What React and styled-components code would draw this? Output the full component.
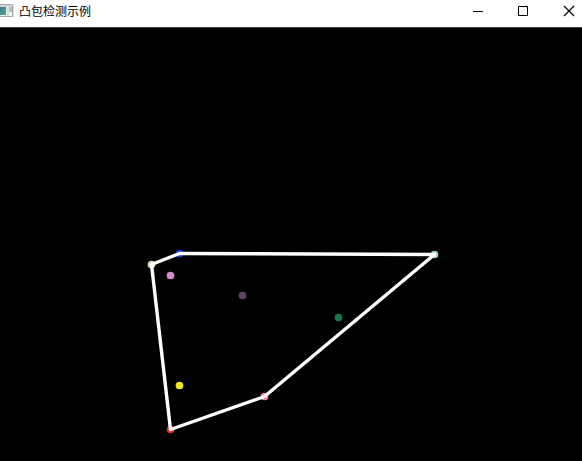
import React from "react";
import styled, { createGlobalStyle } from "styled-components";

const GlobalStyle = createGlobalStyle`
  body { margin: 0; background: #000; overflow: hidden; }
`;

const Window = styled.main`
  width: 582px;
  height: 461px;
  display: flex;
  flex-direction: column;
  overflow: hidden;
  background: #000;
`;

const TitleBar = styled.header`
  box-sizing: border-box;
  height: 28px;
  flex: none;
  display: flex;
  align-items: flex-start;
  background: #fff;
  border-bottom: 1px solid #3c3c3c;
`;

const AppIcon = styled.svg`
  display: block;
  flex: none;
  width: 14px;
  height: 24px;
`;

const Title = styled.h1`
  margin: 0 auto 0 5px;
  font: 400 12px/22px "Noto Sans CJK SC", sans-serif;
  color: #000;
  white-space: nowrap;
`;

const Controls = styled.div`
  display: flex;
  flex: none;
  margin-right: -10px;
`;

const ControlButton = styled.button`
  width: 45px;
  height: 24px;
  padding: 0;
  border: 0;
  background: transparent;
  color: #000;
`;

const Glyph = styled.svg`
  display: block;
  width: 45px;
  height: 24px;
  fill: none;
  stroke: currentColor;
`;

const Canvas = styled.svg`
  display: block;
  flex: none;
  width: 582px;
  height: 433px;
  background: #000;
`;

const points = [
  { x: 151.5, y: 264.5, color: "#d5d6b8" },
  { x: 179.5, y: 253.5, color: "#1239d5" },
  { x: 434.5, y: 254.5, color: "#a5d0c7" },
  { x: 264.5, y: 396.5, color: "#f483b1" },
  { x: 170.5, y: 429.5, color: "#d82d19" },
  { x: 170.5, y: 275.5, color: "#d38ac8" },
  { x: 242.5, y: 295.5, color: "#604360" },
  { x: 338.5, y: 317.5, color: "#147744" },
  { x: 179.5, y: 385.5, color: "#f8e322" },
];

const hull = points.slice(0, 5).map(({ x, y }) => `${x},${y}`).join(" ");

export default function App() {
  return (
    <>
      <GlobalStyle />
      <Window>
        <TitleBar>
          <AppIcon viewBox="0 0 14 24" aria-hidden="true">
            <defs>
              <linearGradient id="preview" x1="0" y1="0" x2="1" y2="1">
                <stop stopColor="#3c7fa0" />
                <stop offset="1" stopColor="#55a877" />
              </linearGradient>
            </defs>
            <path d="M-2 4.5H12.5V16.5H-2" fill="#eef0f3" stroke="#a5a8ac" />
            <path d="M0 5H12V7H0z" fill="#d3d6da" />
            <path d="M0 7H6V15H0z" fill="url(#preview)" />
            <path d="M7 7H9V15H7z" fill="#d8dde4" />
            <path d="M9 7H12V12H9z" fill="#a9c6bc" />
            <path d="M13.5 5V17" stroke="#dedede" />
          </AppIcon>
          <Title>凸包检测示例</Title>
          <Controls>
            <ControlButton aria-label="Minimize">
              <Glyph viewBox="0 0 45 24"><path d="M16 11.5H26" /></Glyph>
            </ControlButton>
            <ControlButton aria-label="Maximize">
              <Glyph viewBox="0 0 45 24"><path d="M16.5 6.5H25.5V15.5H16.5Z" /></Glyph>
            </ControlButton>
            <ControlButton aria-label="Close">
              <Glyph viewBox="0 0 45 24"><path d="M17 6L27 16M27 6L17 16" strokeWidth="1.2" /></Glyph>
            </ControlButton>
          </Controls>
        </TitleBar>
        <Canvas viewBox="0 28 582 433" aria-label="Convex hull">
          {points.map(({ x, y, color }) => (
            <circle key={`${x}-${y}`} cx={x} cy={y} r="3.85" fill={color} />
          ))}
          <polygon points={hull} fill="none" stroke="#fff" strokeWidth="3.4" strokeLinejoin="round" />
        </Canvas>
      </Window>
    </>
  );
}
